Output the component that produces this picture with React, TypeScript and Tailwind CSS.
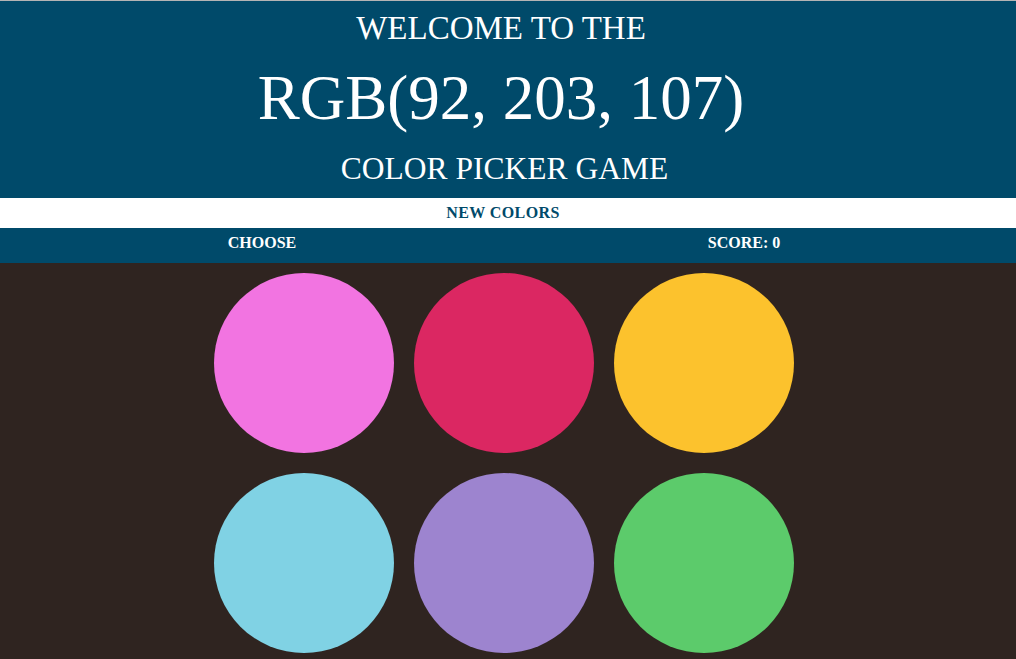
const colors = ['#f274e1', '#db2762', '#fcc22d', '#80d2e4', '#9d84cf', '#5ccb6b'];

export default function App() {
  const serif = { fontFamily: '"Liberation Serif", "DejaVu Serif", serif' };

  return (
    <div className="min-h-[659px] bg-[#2f2420] border-t border-[#b4b4b4]" style={serif}>
      {/* Header */}
      <header className="bg-[#004a6a] text-white pr-[14px] text-center h-[197px] flex flex-col items-center">
        <h1 className="text-[33px] leading-none mt-[11px] uppercase">Welcome to the</h1>
        <h2 className="text-[63px] leading-none mt-[22px]">RGB(92, 203, 107)</h2>
        <h3 className="text-[31.5px] leading-none mt-[23px] pl-[7px] uppercase">Color picker game</h3>
      </header>

      {/* New colors */}
      <div className="bg-white h-[30px] flex items-center justify-center pl-[4px] pr-[14px]">
        <button className="text-[#004a6a] text-[16px] font-semibold tracking-wide uppercase">New colors</button>
      </div>

      {/* Status bar */}
      <div className="bg-[#004a6a] h-[35px] grid grid-cols-2 pl-[21px] pr-[31px] items-center pb-[6px] text-white text-[16px] font-bold">
        <span className="text-center">CHOOSE</span>
        <span className="text-center">SCORE: 0</span>
      </div>

      {/* Circles */}
      <div className="w-[1008px]">
        <div className="mx-auto w-[580px] grid grid-cols-3 gap-5 pt-[10px]">
          {colors.map((c) => (
            <div key={c} className="w-[180px] h-[180px] rounded-full" style={{ backgroundColor: c }} />
          ))}
        </div>
      </div>
    </div>
  );
}
